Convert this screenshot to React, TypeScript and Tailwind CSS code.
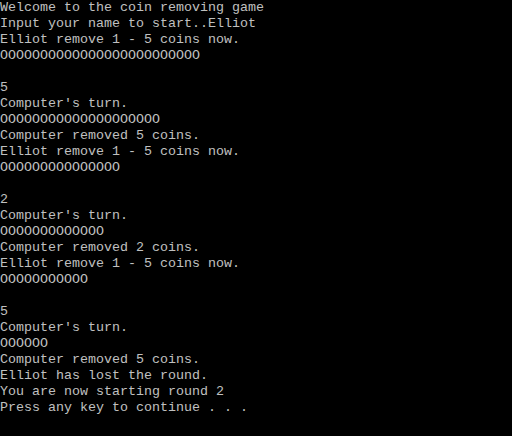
import React from "react";

const lines: string[] = [
  "Welcome to the coin removing game",
  "Input your name to start..Elliot",
  "Elliot remove 1 - 5 coins now.",
  "O".repeat(25),
  "",
  "5",
  "Computer's turn.",
  "O".repeat(20),
  "Computer removed 5 coins.",
  "Elliot remove 1 - 5 coins now.",
  "O".repeat(15),
  "",
  "2",
  "Computer's turn.",
  "O".repeat(13),
  "Computer removed 2 coins.",
  "Elliot remove 1 - 5 coins now.",
  "O".repeat(11),
  "",
  "5",
  "Computer's turn.",
  "O".repeat(6),
  "Computer removed 5 coins.",
  "Elliot has lost the round.",
  "You are now starting round 2",
  "Press any key to continue . . .",
];

export default function App() {
  return (
    <div
      className="w-[512px] h-[436px] bg-black text-[#c0c0c0] overflow-hidden"
      style={{ fontFamily: '"Liberation Mono", "DejaVu Sans Mono", monospace' }}
    >
      <div className="flex flex-col text-[13.33px] leading-[16px] whitespace-pre">
        {lines.map((l, i) => (
          <div key={i} className="h-4">
            {l}
          </div>
        ))}
      </div>
    </div>
  );
}
